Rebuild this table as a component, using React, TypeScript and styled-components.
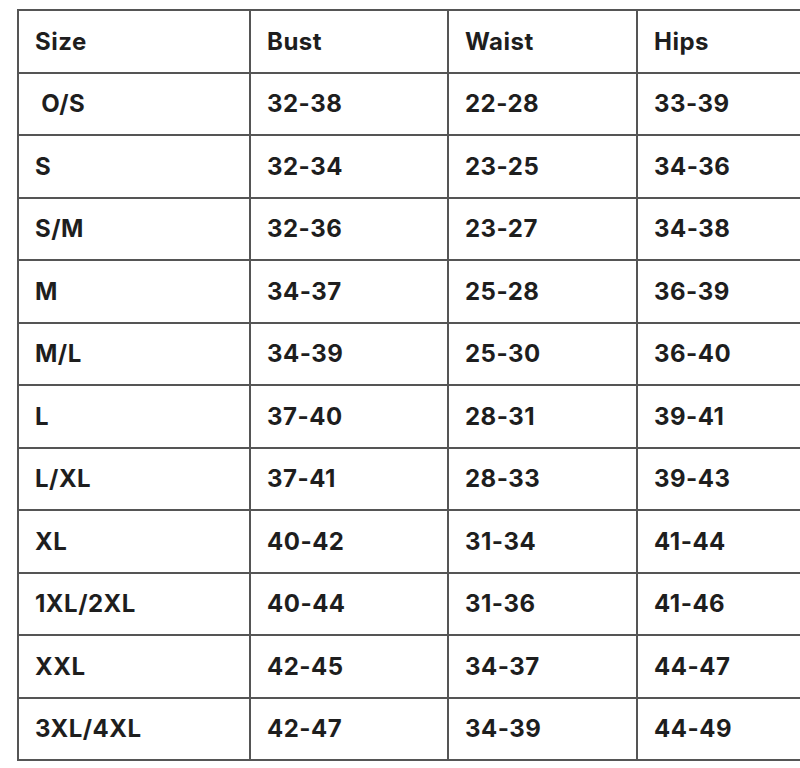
import React from 'react';
import styled, { createGlobalStyle } from 'styled-components';

// Size chart rows: size, bust, waist, hips
type SizeRow = {
  size: string;
  bust: string;
  waist: string;
  hips: string;
};

const rows: SizeRow[] = [
  { size: '\u00a0O/S', bust: '32-38', waist: '22-28', hips: '33-39' },
  { size: 'S', bust: '32-34', waist: '23-25', hips: '34-36' },
  { size: 'S/M', bust: '32-36', waist: '23-27', hips: '34-38' },
  { size: 'M', bust: '34-37', waist: '25-28', hips: '36-39' },
  { size: 'M/L', bust: '34-39', waist: '25-30', hips: '36-40' },
  { size: 'L', bust: '37-40', waist: '28-31', hips: '39-41' },
  { size: 'L/XL', bust: '37-41', waist: '28-33', hips: '39-43' },
  { size: 'XL', bust: '40-42', waist: '31-34', hips: '41-44' },
  { size: '1XL/2XL', bust: '40-44', waist: '31-36', hips: '41-46' },
  { size: 'XXL', bust: '42-45', waist: '34-37', hips: '44-47' },
  { size: '3XL/4XL', bust: '42-47', waist: '34-39', hips: '44-49' },
];

const columns = [
  { label: 'Size', width: 232 },
  { label: 'Bust', width: 198 },
  { label: 'Waist', width: 189 },
  { label: 'Hips', width: 200 },
];

const GlobalStyle = createGlobalStyle`
  html, body {
    margin: 0;
    overflow: hidden;
    background: #fff;
  }
`;

const Page = styled.div`
  padding: 9px 0 0 17px;
  height: 768px;
  box-sizing: border-box;
  overflow: hidden;
`;

const Table = styled.table`
  border-collapse: collapse;
  table-layout: fixed;
  width: 819px;
  font-family: Inter, "Liberation Sans", sans-serif;
  font-weight: 700;
  font-size: 24px;
  letter-spacing: 0.5px;
  color: #1e1e1e;
`;

const Row = styled.tr`
  height: 62.5px;
`;

const HeadCell = styled.th<{ $w: number }>`
  box-sizing: border-box;
  width: ${({ $w }) => $w}px;
  border: 2px solid #555;
  padding: 0 16px;
  text-align: left;
  font-weight: 700;
  white-space: pre;
`;

const Cell = styled.td`
  border: 2px solid #555;
  padding: 0 16px;
  white-space: pre;
`;

const SizeChart: React.FC = () => (
  <Table>
    <thead>
      <Row>
        {columns.map((c) => (
          <HeadCell key={c.label} $w={c.width}>
            {c.label}
          </HeadCell>
        ))}
      </Row>
    </thead>
    <tbody>
      {rows.map((r) => (
        <Row key={r.size}>
          <Cell>{r.size}</Cell>
          <Cell>{r.bust}</Cell>
          <Cell>{r.waist}</Cell>
          <Cell>{r.hips}</Cell>
        </Row>
      ))}
    </tbody>
  </Table>
);

const App: React.FC = () => (
  <>
    <GlobalStyle />
    <Page>
      <SizeChart />
    </Page>
  </>
);

export default App;
